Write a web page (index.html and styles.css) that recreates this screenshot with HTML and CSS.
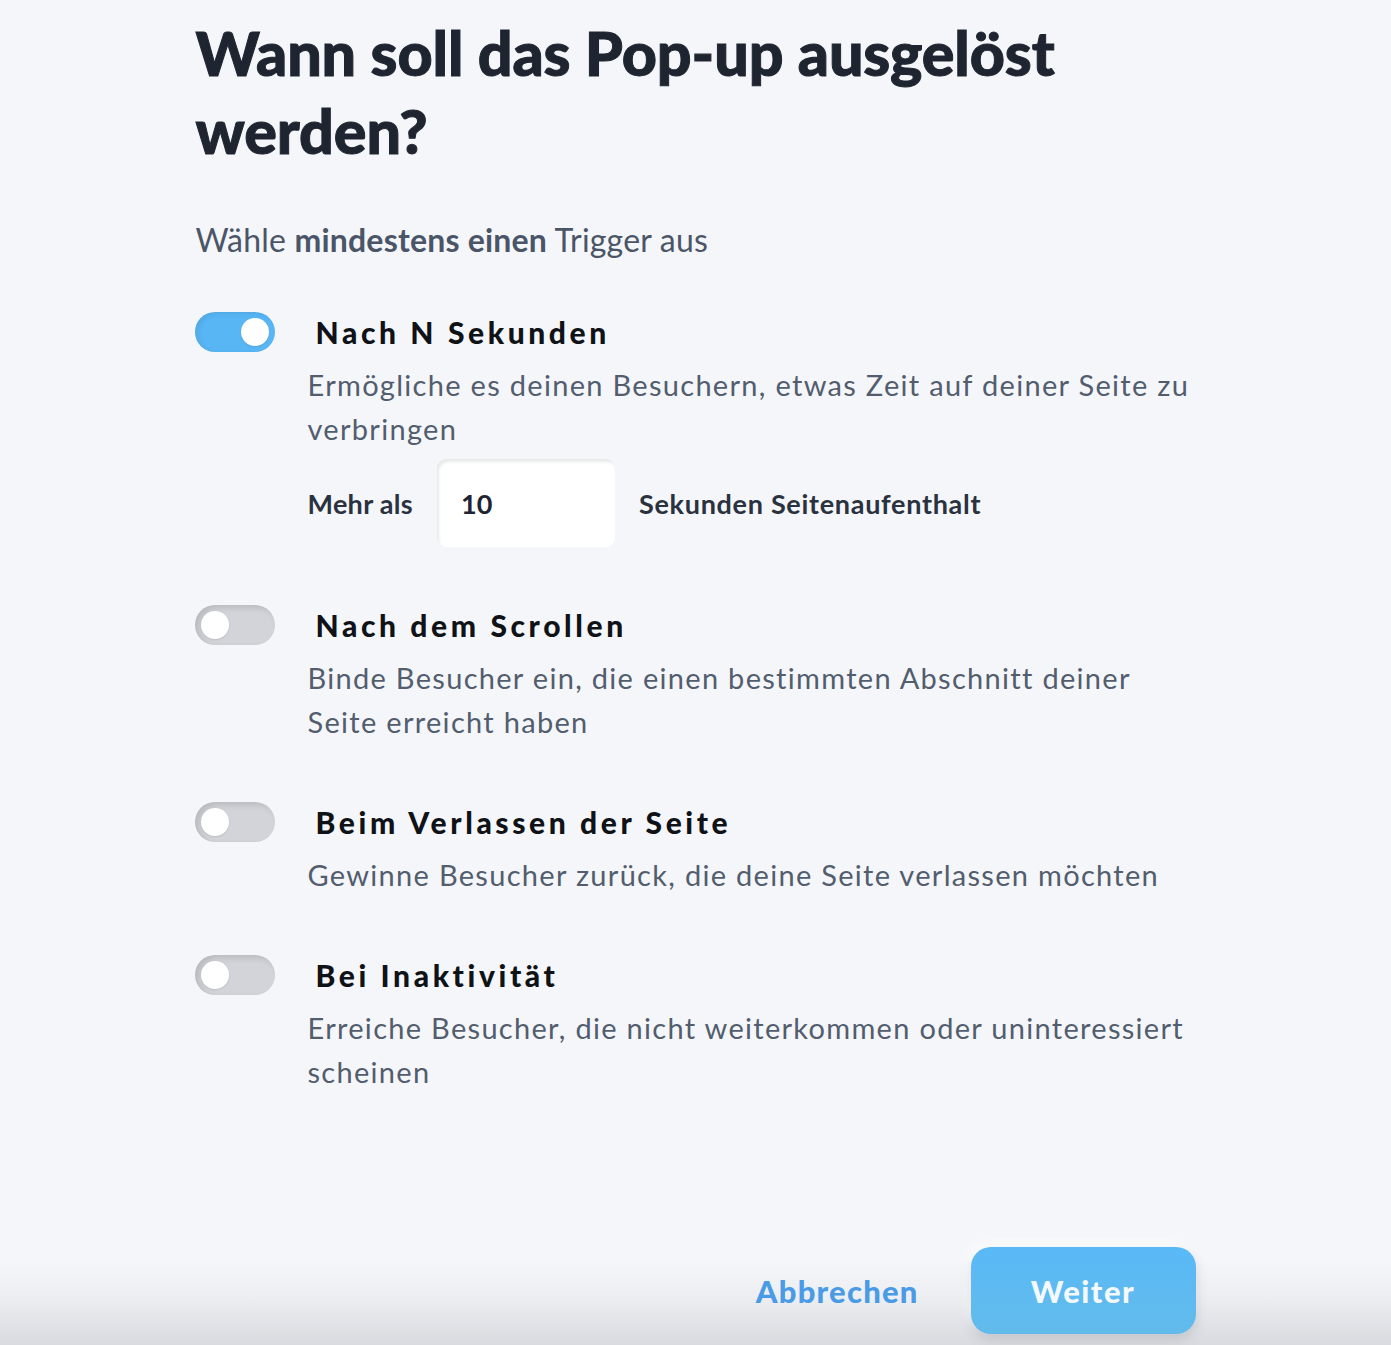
FILE: index.html
```html
<!DOCTYPE html>
<html lang="de">
<head>
<meta charset="utf-8">
<title>Trigger</title>
<link rel="stylesheet" href="styles.css">
</head>
<body>
<div class="page">
  <main class="content">
    <h1 class="headline">Wann soll das Pop-up ausgelöst werden?</h1>
    <p class="subtitle">Wähle <strong>mindestens einen</strong> Trigger aus</p>

    <section class="trigger">
      <div class="trigger-head">
        <span class="toggle toggle-on"><span class="knob"></span></span>
        <h2 class="trigger-title">Nach N Sekunden</h2>
      </div>
      <div class="trigger-body">
        <p class="trigger-desc">Ermögliche es deinen Besuchern, etwas Zeit auf deiner Seite zu verbringen</p>
        <div class="input-row">
          <span class="input-label">Mehr als</span>
          <div class="num-input">10</div>
          <span class="input-label">Sekunden Seitenaufenthalt</span>
        </div>
      </div>
    </section>

    <section class="trigger">
      <div class="trigger-head">
        <span class="toggle"><span class="knob"></span></span>
        <h2 class="trigger-title">Nach dem Scrollen</h2>
      </div>
      <div class="trigger-body">
        <p class="trigger-desc">Binde Besucher ein, die einen bestimmten Abschnitt deiner Seite erreicht haben</p>
      </div>
    </section>

    <section class="trigger">
      <div class="trigger-head">
        <span class="toggle"><span class="knob"></span></span>
        <h2 class="trigger-title">Beim Verlassen der Seite</h2>
      </div>
      <div class="trigger-body">
        <p class="trigger-desc">Gewinne Besucher zurück, die deine Seite verlassen möchten</p>
      </div>
    </section>

    <section class="trigger">
      <div class="trigger-head">
        <span class="toggle"><span class="knob"></span></span>
        <h2 class="trigger-title">Bei Inaktivität</h2>
      </div>
      <div class="trigger-body">
        <p class="trigger-desc">Erreiche Besucher, die nicht weiterkommen oder uninteressiert scheinen</p>
      </div>
    </section>
  </main>

  <footer class="footer">
    <div class="footer-inner">
      <button class="btn-cancel" type="button">Abbrechen</button>
      <button class="btn-next" type="button">Weiter</button>
    </div>
  </footer>
</div>
</body>
</html>
```

FILE: styles.css
```css
* { box-sizing: border-box; }

html, body {
  margin: 0;
  padding: 0;
  background: #f5f6fa;
}

body {
  font-family: "Lato", "Open Sans", sans-serif;
  color: #4a5568;
}

.page {
  min-height: 100vh;
  height: 1345px;
  display: flex;
  flex-direction: column;
  overflow: hidden;
}

.content {
  width: 1000px;
  margin: 0 auto;
  padding-top: 14px;
  flex: 1;
}

.headline {
  margin: 0;
  font-size: 61px;
  line-height: 78px;
  font-weight: 900;
  color: #1f2530;
  letter-spacing: -0.1px;
  -webkit-text-stroke: 1px #1f2530;
  width: 900px;
}

.subtitle {
  margin: 50px 0 0;
  font-size: 32px;
  line-height: 40px;
  color: #4a5568;
  font-weight: 400;
  letter-spacing: 0.2px;
}

.subtitle strong {
  font-weight: 700;
}

.trigger {
  margin-top: 52px;
}

.trigger + .trigger {
  margin-top: 58px;
}

.trigger-head {
  display: flex;
  align-items: center;
  height: 40px;
  margin-left: -1px;
}

.toggle {
  width: 80px;
  height: 40px;
  border-radius: 20px;
  background: #d2d4d9;
  box-shadow: inset 4px 3px 6px rgba(0, 0, 0, 0.12);
  display: flex;
  align-items: center;
  padding: 0 6px;
  flex: none;
}

.toggle .knob {
  width: 28px;
  height: 28px;
  border-radius: 50%;
  background: #ffffff;
  box-shadow: 0 1px 2px rgba(0, 0, 0, 0.1);
}

.toggle-on {
  background: #58b6f5;
  box-shadow: inset 3px 2px 5px rgba(0, 0, 0, 0.08);
  justify-content: flex-end;
}

.trigger-title {
  margin: 0 0 0 41px;
  font-size: 30px;
  font-weight: 900;
  letter-spacing: 3.6px;
  color: #0f1216;
  line-height: 40px;
}

.trigger-body {
  padding-left: 112px;
  margin-top: 11px;
}

.trigger-desc {
  margin: 0;
  font-size: 29px;
  line-height: 44px;
  color: #525d6e;
  letter-spacing: 1.3px;
  max-width: 892px;
}

.input-row {
  display: flex;
  align-items: center;
  gap: 24px;
  margin-top: 8px;
}

.input-label {
  font-size: 27px;
  font-weight: 700;
  color: #2a3240;
  letter-spacing: 0.7px;
}

.input-label:first-child {
  letter-spacing: 0.3px;
}

.num-input {
  width: 178px;
  height: 88px;
  border-radius: 9px;
  background: #ffffff;
  box-shadow: inset 2px 3px 3px rgba(0, 0, 0, 0.09);
  display: flex;
  align-items: center;
  padding-left: 24px;
  font-size: 27px;
  font-weight: 700;
  color: #1f2530;
}

.footer {
  height: 105px;
  background: linear-gradient(to bottom, #f5f6fa 0%, #f5f6fa 20%, #eceef2 55%, #d9dadf 100%);
}

.footer-inner {
  width: 1000px;
  margin: 0 auto;
  display: flex;
  justify-content: flex-end;
  align-items: center;
  gap: 52px;
  padding-top: 7px;
}

.btn-cancel {
  border: none;
  background: none;
  padding: 0;
  font-family: inherit;
  font-size: 31px;
  font-weight: 900;
  letter-spacing: 1.2px;
  color: #4a9be6;
}

.btn-next {
  width: 225px;
  height: 87px;
  border: none;
  border-radius: 20px;
  background: linear-gradient(to bottom, #59b9f7, #62bbea);
  box-shadow: 0 5px 12px rgba(60, 70, 90, 0.18), -4px -4px 10px rgba(255, 255, 255, 0.9);
  font-family: inherit;
  font-size: 31px;
  font-weight: 900;
  letter-spacing: 1.5px;
  color: #f3f9fe;
}
```
